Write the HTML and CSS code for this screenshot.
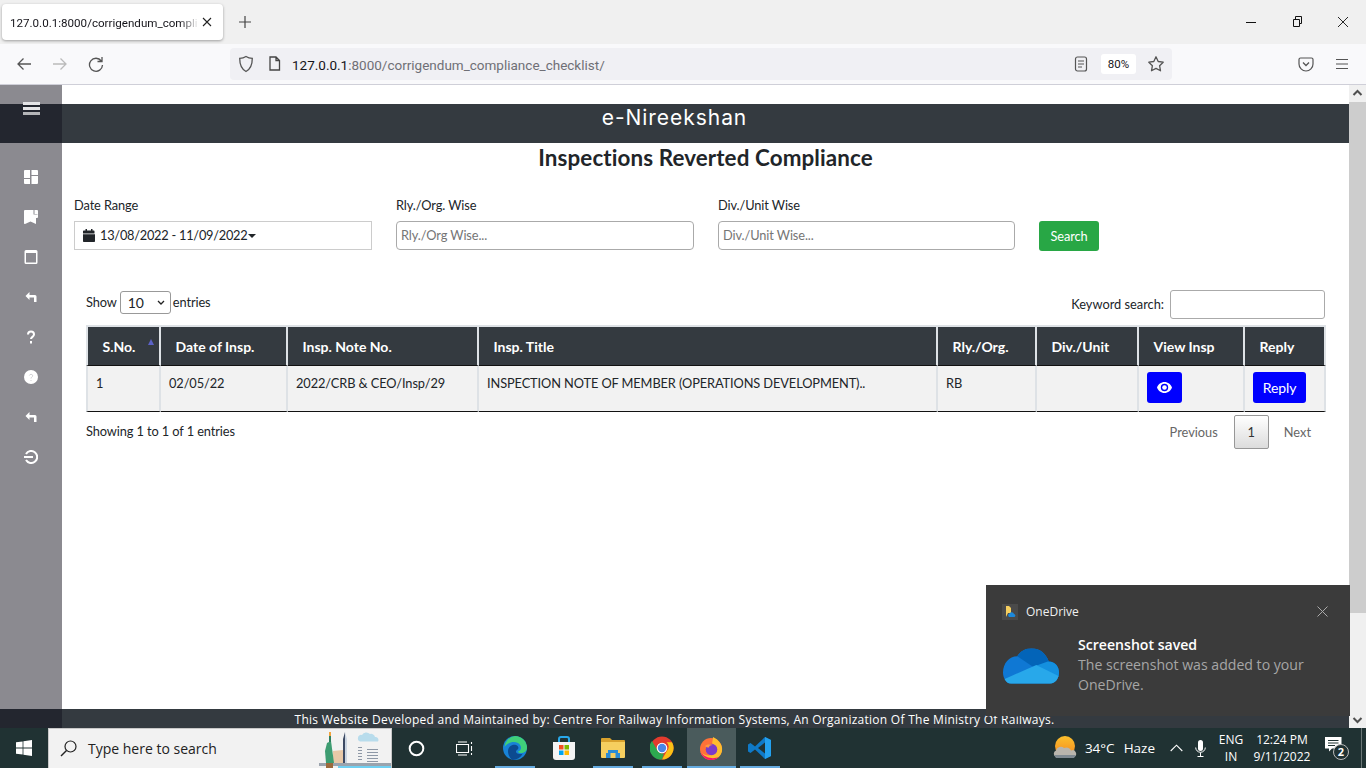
FILE: index.html
```html
<!DOCTYPE html>
<html lang="en">
<head>
<meta charset="utf-8">
<title>e-Nireekshan</title>
<link rel="stylesheet" href="styles.css">
</head>
<body>
<div class="screen">
  <div class="tabbar">
    <div class="tab">
      <span class="tab-title">127.0.0.1:8000/corrigendum_compli</span>
      <svg class="tab-close" width="10" height="10" viewBox="0 0 10 10"><path d="M1 1l8 8M9 1l-8 8" stroke="#222" stroke-width="1.1" fill="none"/></svg>
    </div>
    <svg class="newtab" width="14" height="14" viewBox="0 0 14 14"><path d="M7 1v12M1 7h12" stroke="#444" stroke-width="1.2"/></svg>
    <div class="winctl">
      <svg width="46" height="16" viewBox="0 0 46 16"><path d="M18 8.500h10" stroke="#111" stroke-width="1"/></svg>
      <svg width="46" height="16" viewBox="0 0 46 16"><path d="M19.500 5.500h6v7h-6zM21.500 5.500v-3h6v7h-2" stroke="#111" fill="none"/></svg>
      <svg width="46" height="16" viewBox="0 0 46 16"><path d="M18 3l10 10M28 3l-10 10" stroke="#111" fill="none" stroke-width=".9"/></svg>
    </div>
  </div>
  <div class="toolbar">
    <div class="nav">
      <svg width="16" height="16" viewBox="0 0 16 16"><path d="M15 8H2M7.500 2.500L2 8l5.500 5.500" stroke="#555" stroke-width="1.3" fill="none"/></svg>
      <svg width="16" height="16" viewBox="0 0 16 16"><path d="M1 8h13M8.500 2.500L14 8l-5.500 5.500" stroke="#bbb" stroke-width="1.3" fill="none"/></svg>
      <svg width="16" height="16" viewBox="0 0 16 16"><path d="M13.300 5A6.500 6.500 0 1 0 14.500 9M14 1v4.500H9.500" stroke="#555" stroke-width="1.3" fill="none"/></svg>
    </div>
    <div class="urlbar">
      <svg class="u-shield" width="16" height="18" viewBox="0 0 16 18"><path d="M8 1.500c2 1.300 4 1.800 6.300 1.800 0 6-1 10.500-6.300 13.200C2.700 13.800 1.700 9.300 1.700 3.300 4 3.300 6 2.800 8 1.500z" stroke="#555" stroke-width="1.300" fill="none"/></svg>
      <svg class="u-page" width="13" height="15" viewBox="0 0 13 15"><path d="M2 1h6l3.500 3.500V14H2zM8 1v3.500h3.500" stroke="#444" stroke-width="1.300" fill="none"/></svg>
      <span class="url"><span class="url-host">127.0.0.1</span>:8000/corrigendum_compliance_checklist/</span>
      <svg class="u-reader" width="14" height="16" viewBox="0 0 14 16"><rect x="1.500" y="1" width="11" height="14" rx="2" stroke="#555" stroke-width="1.200" fill="none"/><path d="M4 5h6M4 8h6M4 11h4" stroke="#555" stroke-width="1.100"/></svg>
      <span class="zoomlvl">80%</span>
      <svg class="u-star" width="18" height="18" viewBox="0 0 18 18"><path d="M9 1.800l2.200 4.700 5 .7-3.600 3.500.9 5.100L9 13.400l-4.500 2.400.9-5.100L1.800 7.200l5-.7z" stroke="#555" stroke-width="1.300" fill="none" stroke-linejoin="round"/></svg>
    </div>
    <div class="tools">
      <svg width="16" height="16" viewBox="0 0 16 16"><path d="M2.500 2h11A1.500 1.500 0 0 1 15 3.500V8a7 7 0 0 1-14 0V3.500A1.500 1.500 0 0 1 2.500 2z" stroke="#555" stroke-width="1.200" fill="none"/><path d="M5 6.500L8 9.500l3-3" stroke="#555" stroke-width="1.300" fill="none"/></svg>
      <svg width="16" height="16" viewBox="0 0 16 16"><path d="M2 3.500h12M2 8h12M2 12.500h12" stroke="#555" stroke-width="1.200"/></svg>
    </div>
  </div>

  <div class="viewport">
    <aside class="sidebar">
      <svg class="side-menu" width="18" height="14" viewBox="0 0 18 14"><path d="M0 0h17v3H0zM0 5h17v3H0z" fill="#e4e4e6"/><path d="M0 10h17v3H0z" fill="#b4b5b8"/></svg>
      <svg class="side-icon" width="14" height="14" viewBox="0 0 14 14"><path d="M0 1a1 1 0 0 1 1-1h5v8H0zM7.500 0H13a1 1 0 0 1 1 1v4H7.500zM7.500 6H14v7a1 1 0 0 1-1 1H7.500zM0 9h6v5H1a1 1 0 0 1-1-1z" fill="#fff"/></svg>
      <svg class="side-icon" width="14" height="14" viewBox="0 0 14 14"><path d="M1 0h8.500v4.500H13.500V1a1 1 0 0 1 .5 0v6c0 .5-.5 1-1 1h-1v6L6.500 11.500 1 14a1 1 0 0 1-1-.5V1a1 1 0 0 1 1-1z" fill="#fff"/><path d="M10.500 0H13a1 1 0 0 1 1 1v3h-3.500z" fill="#fff"/></svg>
      <svg class="side-icon" width="14" height="14" viewBox="0 0 14 14"><path d="M2 0h10a1.500 1.500 0 0 1 1.500 1.500v11A1.500 1.500 0 0 1 12 14H2a1.500 1.500 0 0 1-1.500-1.500v-11A1.500 1.500 0 0 1 2 0zm0 3v9.500h10V3z" fill="#fff"/></svg>
      <svg class="side-icon" width="14" height="14" viewBox="0 0 14 14"><path d="M5.500 2L1.500 6l4 4V7.500H10V12h2.500V6.500a1.500 1.500 0 0 0-1.500-1.500H5.500z" fill="#fff"/></svg>
      <svg class="side-icon" width="14" height="14" viewBox="0 0 14 14"><path d="M4 4.500a3 3 0 0 1 6 0c0 2.200-3 2.500-3 4.500" stroke="#fff" stroke-width="2" fill="none"/><path d="M6 11h2v2.500H6z" fill="#fff"/></svg>
      <svg class="side-icon" width="14" height="14" viewBox="0 0 14 14"><circle cx="7" cy="7" r="7" fill="#fff"/><path d="M5.400 5.500a1.700 1.700 0 0 1 3.300.3c0 1.200-1.700 1.300-1.700 2.700M7 10v1" stroke="#cfcfd2" fill="none"/></svg>
      <svg class="side-icon" width="14" height="14" viewBox="0 0 14 14"><path d="M5.500 2L1.500 6l4 4V7.500H10V12h2.500V6.500a1.500 1.500 0 0 0-1.500-1.500H5.500z" fill="#fff"/></svg>
      <svg class="side-icon" width="14" height="14" viewBox="0 0 14 14"><path d="M2 4a6 6 0 1 1 0 6" stroke="#fff" stroke-width="2" fill="none"/><path d="M0 7h9" stroke="#fff" stroke-width="2"/></svg>
    </aside>

    <main class="page">
      <header class="brand">e-Nireekshan</header>
      <h1 class="title">Inspections Reverted Compliance</h1>

      <form class="filters">
        <div class="field">
          <label class="field-label">Date Range</label>
          <div class="date-box">
            <svg width="12" height="13" viewBox="0 0 12 13"><path d="M2.500 0h1.500v1.500h4V0h1.500v1.500h1.300c.4 0 .7.300.7.700V4.500H0V2.200c0-.4.300-.7.700-.7h1.800zM0 5.300h12v7c0 .4-.3.700-.7.700H.7c-.4 0-.7-.3-.7-.7z" fill="#212529"/></svg>
            <span>13/08/2022 - 11/09/2022</span>
            <span class="caret"></span>
          </div>
        </div>
        <div class="field">
          <label class="field-label">Rly./Org. Wise</label>
          <div class="text-box">Rly./Org Wise...</div>
        </div>
        <div class="field field-last">
          <label class="field-label">Div./Unit Wise</label>
          <div class="text-box">Div./Unit Wise...</div>
        </div>
        <div class="search-btn">Search</div>
      </form>

      <section class="listing">
        <div class="list-top">
          <div class="len">Show <span class="len-select">10<svg width="8" height="5" viewBox="0 0 8 5"><path d="M1 1l3 3 3-3" stroke="#222" stroke-width="1.300" fill="none"/></svg></span> entries</div>
          <div class="kw"><span class="kw-label">Keyword search:</span> <span class="kw-input"></span></div>
        </div>
        <table class="grid">
          <colgroup>
            <col class="c1"><col class="c2"><col class="c3"><col class="c4"><col class="c5"><col class="c6"><col class="c7"><col class="c8">
          </colgroup>
          <thead>
            <tr>
              <th class="sorted">S.No.<span class="sort-mark"></span></th>
              <th>Date of Insp.</th>
              <th>Insp. Note No.</th>
              <th>Insp. Title</th>
              <th>Rly./Org.</th>
              <th>Div./Unit</th>
              <th>View Insp</th>
              <th>Reply</th>
            </tr>
          </thead>
          <tbody>
            <tr>
              <td>1</td>
              <td>02/05/22</td>
              <td>2022/CRB &amp; CEO/Insp/29</td>
              <td>INSPECTION NOTE OF MEMBER (OPERATIONS DEVELOPMENT)..</td>
              <td>RB</td>
              <td></td>
              <td class="act"><span class="blue-btn eye"><svg width="15" height="11" viewBox="0 0 15 11"><path d="M7.500 0C4 0 1.300 2.300 0 5.500 1.300 8.700 4 11 7.500 11s6.200-2.300 7.500-5.500C13.700 2.300 11 0 7.500 0zm0 9.200a3.700 3.700 0 1 1 0-7.400 3.700 3.700 0 0 1 0 7.400z" fill="#fff"/><circle cx="7.500" cy="5.500" r="2.300" fill="#fff"/></svg></span></td>
              <td class="act"><span class="blue-btn">Reply</span></td>
            </tr>
          </tbody>
        </table>
        <div class="list-bottom">
          <div class="info">Showing 1 to 1 of 1 entries</div>
          <div class="pager"><span class="pg">Previous</span><span class="pg-cur">1</span><span class="pg">Next</span></div>
        </div>
      </section>

      <footer class="site-foot">This Website Developed and Maintained by: Centre For Railway Information Systems, An Organization Of The Ministry Of Railways.</footer>
    </main>

    <div class="scrollbar">
      <svg class="sb-arrow" width="17" height="17" viewBox="0 0 17 17"><path d="M4.500 10l4-4 4 4" stroke="#505050" stroke-width="2" fill="none"/></svg>
      <div class="sb-thumb"></div>
      <svg class="sb-arrow" width="17" height="17" viewBox="0 0 17 17"><path d="M4.500 7l4 4 4-4" stroke="#505050" stroke-width="2" fill="none"/></svg>
    </div>

    <div class="toast">
      <div class="toast-head">
        <svg width="16" height="16" viewBox="0 0 16 16"><rect width="16" height="16" fill="#4a4a4a"/><path d="M4 2h3l2 2v5H6l-2 4z" fill="#f6cf5f"/><path d="M7 13a2 2 0 0 1 .5-3.500 2.500 2.500 0 0 1 4.500.5 1.600 1.600 0 0 1 .5 3z" fill="#1d89dc"/></svg>
        <span class="toast-app">OneDrive</span>
        <svg class="toast-x" width="11" height="11" viewBox="0 0 11 11"><path d="M.5.5l10 10M10.500.500l-10 10" stroke="#aaa" fill="none"/></svg>
      </div>
      <div class="toast-body">
        <svg class="toast-cloud" width="56" height="36" viewBox="0 0 55 35">
          <clipPath id="cloudclip"><path d="M8 35C3 35 0 29 0 24 0 15 6 8 14 8 17 3 22 0 28 0 36 0 42 5 45 13 51 13 55 18 55 24 55 30 51 35 46 35z"/></clipPath>
          <g clip-path="url(#cloudclip)">
            <rect width="55" height="35" fill="#0f78d4"/>
            <path d="M12 0h40v15L32 20 14 8z" fill="#0364b8"/>
            <path d="M33 17l11-4h12v16z" fill="#1490df"/>
            <path d="M0 31L32.700 16.500 56 28v8H0z" fill="#28a8ea"/>
          </g>
        </svg>
        <div class="toast-text">
          <div class="toast-title">Screenshot saved</div>
          <div class="toast-msg">The screenshot was added to your OneDrive.</div>
        </div>
      </div>
    </div>
  </div>

  <div class="taskbar">
    <div class="start"><svg width="16" height="16" viewBox="0 0 16 16"><path d="M0 2.300L6.600 1.400v6.100H0zM7.400 1.300L16 0v7.500H7.400zM0 8.400h6.600v6.200L0 13.700zM7.400 8.400H16V16L7.400 14.700z" fill="#fff"/></svg></div>
    <div class="tsearch">
      <svg width="17" height="17" viewBox="0 0 17 17"><circle cx="10.500" cy="6.500" r="5.500" stroke="#222" stroke-width="1.200" fill="none"/><path d="M6.500 10.500L1 16" stroke="#222" stroke-width="1.400"/></svg>
      <span>Type here to search</span>
      <svg class="city" width="73" height="37" viewBox="0 0 73 37">
        <path d="M19 35h54v2H19z" fill="#6fd0f2"/>
        <path d="M0 32h73v3H0z" fill="#9aa3ad"/>
        <path d="M14 20l10-1 0 13H14z" fill="#e8c9a8"/>
        <path d="M8 12l4-2 3 22H7l-1-12z" fill="#3e9d72"/>
        <path d="M10 5h2v6h-2z" fill="#2f7f5f"/><path d="M10 1h2v4h-2z" fill="#f2a33c"/>
        <path d="M7 32h7v5H7z" fill="#9c6a3c"/>
        <path d="M24 8l2-7v31h-2z" fill="#3d4a63"/><path d="M26 1l2 7v24h-2z" fill="#ccd6e2"/>
        <path d="M39 7a3 3 0 0 1 4-3 5 5 0 0 1 8-1 4 4 0 0 1 5 3 3 3 0 0 1 3 4.500H41a3 3 0 0 1-2-3.500z" fill="#b8dcec"/>
        <path d="M39 16h4v1h-4zM39 19h4v1h-4zM39 22h4v1h-4zM39 25h4v1h-4zM39 28h4v1h-4zM48 18h11v1H48zM48 21h11v1H48zM48 24h11v1H48zM48 27h11v1H48zM48 30h11v1H48z" fill="#8e98a6"/>
      </svg>
    </div>
    <div class="tb-cell"><svg width="17" height="17" viewBox="0 0 17 17"><circle cx="8.500" cy="8.500" r="6.800" stroke="#fff" stroke-width="2" fill="none"/></svg></div>
    <div class="tb-cell"><svg width="17" height="15" viewBox="0 0 17 15"><path d="M.5 3.500h12v8H.5zM2 1h9M2 14h9M15.500 1v2M15.500 5v5M15.500 12v2" stroke="#fff" fill="none" stroke-width="1.100"/></svg></div>
    <div class="tb-app lit first"><svg width="24" height="24" viewBox="0 0 24 24"><circle cx="12" cy="12" r="12" fill="#1883d6"/><path d="M12 0a12 12 0 0 1 12 12c0 3-3 5-6 5-2 0-3-.7-3-1.500 4-1 4-6 0-8.500-5-2.500-11 0-13.500 4A12 12 0 0 1 12 0z" fill="#3fd07a"/><path d="M5 15c0-4 4-7 8-6 3 1 3 4 1 5-2 1-1 4 3 4 1.500 0 2.500 0 3-1a12 12 0 0 1-11 7C6 21 5 18 5 15z" fill="#0c4a90"/></svg></div>
    <div class="tb-app"><svg width="24" height="24" viewBox="0 0 24 24"><path d="M7 7V3a2 2 0 0 1 2-2h6a2 2 0 0 1 2 2v4" stroke="#28a8ea" stroke-width="2" fill="none"/><path d="M1 6h22v15a3 3 0 0 1-3 3H4a3 3 0 0 1-3-3z" fill="#f4f4f4"/><path d="M7 9h4.500v4.500H7z" fill="#f25022"/><path d="M12.500 9H17v4.500h-4.500z" fill="#7fba00"/><path d="M7 14.500h4.500V19H7z" fill="#00a4ef"/><path d="M12.500 14.500H17V19h-4.500z" fill="#ffb900"/></svg></div>
    <div class="tb-app lit"><svg width="24" height="20" viewBox="0 0 24 20"><path d="M0 1a1 1 0 0 1 1-1h8l2 2h12a1 1 0 0 1 1 1v2H0z" fill="#d9a22d"/><path d="M0 4h24v15a1 1 0 0 1-1 1H1a1 1 0 0 1-1-1z" fill="#f6cf5f"/><path d="M7 12h10v3h2v5H5v-5h2z" fill="#2a8cd6"/><path d="M9.500 15h5v5h-5z" fill="#f6cf5f"/></svg></div>
    <div class="tb-app lit"><svg width="24" height="24" viewBox="0 0 24 24"><circle cx="12" cy="12" r="11.500" fill="#e33b2e"/><path d="M22 6.250A11.500 11.500 0 0 1 12 23.500l5-8.700a5.750 5.750 0 0 0-.5-8.550z" fill="#fbc116"/><path d="M2 5l4.800 8.300A5.750 5.750 0 0 0 14 17.300L12 23.500A11.500 11.500 0 0 1 2 5z" fill="#2da94f"/><circle cx="12" cy="12" r="5.300" fill="#fff"/><circle cx="12" cy="12" r="4.200" fill="#4a86e8"/></svg></div>
    <div class="tb-app active"><svg width="24" height="24" viewBox="0 0 24 24"><circle cx="12" cy="13" r="11" fill="#ff7139"/><path d="M14 1c6 3 10 8 9 14-1 5-5 8.500-11 8.500-5 0-9-3-10.500-7.500 3 3 7 4 11 3 4-1 5-5 3-8-1-2-3-3-2-6 .2-1.500.5-3 .5-4z" fill="#ffbd2e"/><path d="M1.500 16A11 11 0 0 0 12 24c3 0 6-1 8-3-5 2-13 2-18.500-5z" fill="#f5156c"/><circle cx="12.500" cy="13.500" r="5.800" fill="#7d3bc9"/><path d="M6 10c2-2 6-2.500 8-1-3 0-4 1-4 2.500-1.500 0-3-.5-4-1.500z" fill="#ff9a3c"/></svg></div>
    <div class="tb-app lit"><svg width="24" height="24" viewBox="0 0 24 24"><path d="M17 1l6 3v16l-6 3-10-9.500L2.500 17 0 15.500v-7L2.500 7 7 10.500z" fill="#0f7ac8"/><path d="M17 6.500L10 12l7 5.500z" fill="#203233"/><path d="M17 1l6 3v16l-6 3z" fill="#23a1ef"/></svg></div>
    <div class="tray">
      <svg width="24" height="24" viewBox="0 0 24 24">
        <linearGradient id="sun" x1="0" y1="0" x2="0" y2="1"><stop offset="0" stop-color="#fbc02d"/><stop offset="1" stop-color="#f58a1f"/></linearGradient>
        <circle cx="12" cy="10" r="10" fill="url(#sun)"/>
        <path d="M3 21a3.500 3.500 0 0 1 0-6.500 5 5 0 0 1 8-2.500 5 5 0 0 1 7 2.500 3.500 3.500 0 0 1 3 6.500z" fill="#b9b5ad"/>
        <path d="M1 19h22l-2 3H3z" fill="#7f8a92"/>
      </svg>
      <span class="temp">34°C</span><span class="haze">Haze</span>
      <svg class="chev" width="13" height="8" viewBox="0 0 13 8"><path d="M.7 7L6.500 1.200 12.300 7" stroke="#fff" fill="none" stroke-width="1.100"/></svg>
      <svg class="mic" width="11" height="17" viewBox="0 0 11 17"><rect x="3" y="0" width="5" height="11" rx="2.500" fill="#fff"/><path d="M.7 7.500a4.800 4.800 0 0 0 9.600 0M5.500 12.500V16M2.500 16.500h6" stroke="#fff" fill="none"/></svg>
      <div class="lang"><span>ENG</span><span>IN</span></div>
      <div class="clock"><span>12:24 PM</span><span>9/11/2022</span></div>
      <div class="notif">
        <svg width="17" height="15" viewBox="0 0 17 15"><path d="M0 0h16.500v11.500H7L4 14.500v-3H0z" fill="#fff"/><path d="M3 3.500h10.500M3 6h10.500M3 8.500h7" stroke="#1f3333"/></svg>
        <span class="notif-badge">2</span>
      </div>
      <div class="show-desktop"></div>
    </div>
  </div>
</div>
</body>
</html>
```

FILE: styles.css
```css
* { box-sizing: border-box; }
html, body { margin: 0; padding: 0; height: 100%; overflow: hidden; }
body { font-family: "Lato", sans-serif; font-size: 12.800px; letter-spacing: -.1px; color: #212529; }
.screen { width: 1366px; height: 768px; display: flex; flex-direction: column; }

/* browser chrome */
.tabbar { height: 44px; background: #f0f0f0; display: flex; align-items: center; padding-left: 2px; font-family: "Roboto", sans-serif; letter-spacing: 0; }
.tab { width: 221px; height: 36px; background: #fff; border-radius: 4px; box-shadow: 0 1px 3px rgba(0,0,0,.35); display: flex; align-items: center; padding: 2px 11px 0 8px; font-size: 11.600px; color: #15141a; }
.tab-title { flex: 1; white-space: nowrap; -webkit-mask-image: linear-gradient(to right, #000 90%, transparent 100%); mask-image: linear-gradient(to right, #000 90%, transparent 100%); }
.tab-close { margin: -2px 0 0 3px; flex: none; }
.newtab { margin-left: 15px; }
.winctl { margin-left: auto; display: flex; align-items: center; }
.toolbar { height: 41px; background: #f9f9fb; border-bottom: 1px solid #cfcfd8; display: flex; align-items: center; font-family: "Roboto", sans-serif; letter-spacing: 0; padding-bottom: 1px; }
.nav { width: 230px; display: flex; gap: 20px; padding-left: 16px; }
.urlbar { width: 942px; height: 32px; background: #f0f0f4; border-radius: 4px; display: flex; align-items: center; padding-left: 8px; color: #6f6f76; font-size: 13.500px; }
.u-page { margin-left: 14px; }
.url { margin-left: 11px; white-space: nowrap; padding-top: 2px; }
.url-host { color: #15141a; }
.u-reader { margin-left: auto; }
.zoomlvl { margin-left: 13px; width: 35px; height: 20px; border-radius: 3px; background: #fff; color: #15141a; font-size: 11.500px; display: flex; align-items: center; justify-content: center; }
.u-star { margin: 0 7px 0 11px; }
.tools { flex: 1; display: flex; justify-content: flex-end; gap: 20px; padding-right: 16px; }

/* page */
.viewport { position: relative; flex: 1; min-height: 0; display: flex; }
.sidebar { position: relative; z-index: 1; width: 62px; flex: none; display: flex; flex-direction: column; align-items: center; padding-top: 17px; background: linear-gradient(to bottom, #8b8a90 0, #8b8a90 19px, #23262f 19px, #23262f 58px, #8b8a90 58px, #8b8a90 624px, #23262f 624px); }
.side-menu { margin-bottom: 54px; margin-left: 1px; flex: none; }
.side-icon { margin-bottom: 26px; flex: none; }
.page { flex: 1; min-width: 0; display: flex; flex-direction: column; background: #fff; padding-top: 19px; margin-left: -62px; }
.brand { height: 39px; background: #343a40; color: #fff; font-family: "Inter", sans-serif; font-size: 21px; letter-spacing: .95px; text-align: center; line-height: 28px; }
.title { margin: 0 0 0 62px; height: 28px; font-size: 22.400px; letter-spacing: .1px; font-weight: 700; line-height: 29px; color: #212529; text-align: center; }
.filters { display: flex; align-items: flex-start; gap: 24px; padding: 26px 0 0 74px; }
.field { width: 298px; }
.field-last { width: 297px; }
.field-label { display: block; height: 24px; line-height: 16px; }
.date-box { height: 29px; border: 1px solid #ccc; display: flex; align-items: center; gap: 5px; padding: 0 0 1px 8px; color: #212529; font-size: 12.800px; letter-spacing: -.25px; }
.caret { width: 0; height: 0; border-left: 4.500px solid transparent; border-right: 4.500px solid transparent; border-top: 4.500px solid #212529; margin: 1px 0 0 -4px; }
.text-box { height: 29px; border: 1px solid #aaa; border-radius: 4px; display: flex; align-items: center; padding: 0 0 1px 4px; color: #757575; }
.search-btn { margin-top: 24px; width: 60px; height: 30px; background: #28a745; color: #fff; border-radius: 3px; display: flex; align-items: center; justify-content: center; }
.listing { padding: 0 24px 0 86px; margin-top: 39px; }
.list-top { display: flex; justify-content: space-between; align-items: center; height: 29px; margin-bottom: 6px; }
.len { display: flex; align-items: center; gap: 3px; margin-top: -5px; }
.len-select { width: 51px; height: 23px; margin-right: -1px; border: 1px solid #999; border-radius: 3px; display: flex; align-items: center; justify-content: space-between; padding: 0 5px 0 7px; color: #212529; font-size: 14px; }
.kw { display: flex; align-items: center; gap: 6px; letter-spacing: 0; }
.kw-label { margin-top: -2px; }
.kw-input { width: 155px; height: 29px; border: 1px solid #aaa; border-radius: 3px; background: #fff; }
.grid { width: 1240px; table-layout: fixed; border-collapse: separate; border-spacing: 0; }
.c1 { width: 75px; } .c2 { width: 127px; } .c3 { width: 191px; } .c4 { width: 459px; }
.c5 { width: 99px; } .c6 { width: 102px; } .c7 { width: 106px; } .c8 { width: 81px; }
.grid th { height: 41px; background: #343a40; color: #fff; font-weight: 700; font-size: 14px; letter-spacing: 0; text-align: left; padding: 0 0 0 14.500px; border-top: 2px solid #dee2e6; border-right: 2px solid #dee2e6; border-bottom: 1px solid #111; position: relative; }
.grid th:first-child, .grid td:first-child { border-left: 2px solid #dee2e6; }
.grid td { height: 46px; background: #f2f2f2; vertical-align: top; padding: 9px 0 0 8px; border-right: 2px solid #dee2e6; border-bottom: 1px solid #111; white-space: nowrap; overflow: hidden; }
.grid td.act { padding: 6px 0 0 8px; }
.sort-mark { position: absolute; right: 5px; top: 12px; width: 0; height: 0; border-left: 3.500px solid transparent; border-right: 3.500px solid transparent; border-bottom: 6px solid #5b62c7; }
.blue-btn { display: inline-flex; align-items: center; justify-content: center; height: 31px; width: 53px; background: #00f; color: #fff; border-radius: 3px; font-size: 14px; }
.blue-btn.eye { width: 35px; }
.list-bottom { display: flex; justify-content: space-between; }
.info { padding-top: 11px; }
.pager { display: flex; align-items: center; padding-top: 3px; margin-right: -1px; color: #666; letter-spacing: 0; }
.pg { padding: 0 15px; }
.pg:first-child { padding-right: 16px; }
.pg-cur { width: 35px; height: 34px; border: 1px solid #979797; border-radius: 2px; background: linear-gradient(to bottom, #fff, #dcdcdc); color: #333; display: flex; align-items: center; justify-content: center; }
.site-foot { margin-top: auto; height: 19px; background: #343a40; color: #fff; font-family: "Open Sans", sans-serif; font-size: 12px; letter-spacing: .27px; line-height: 21px; text-align: center; white-space: nowrap; }

/* scrollbar */
.scrollbar { width: 17px; flex: none; background: #f0f0f0; display: flex; flex-direction: column; justify-content: space-between; }
.sb-thumb { flex: none; height: 511px; margin-bottom: auto; background: #cdcdcd; }

/* toast */
.toast { position: absolute; z-index: 2; left: 986px; top: 500px; width: 364px; height: 131px; background: #3b3b3b; color: #fff; font-family: "Open Sans", sans-serif; letter-spacing: 0; padding: 18px 16px; }
.toast-head { display: flex; align-items: center; gap: 8px; font-size: 12px; }
.toast-app { color: #f0f0f0; }
.toast-x { margin-left: auto; margin-right: 6px; }
.toast-body { display: flex; margin-top: 15px; }
.toast-cloud { margin: 13px 0 0 1px; flex: none; }
.toast-text { margin-left: 19px; font-size: 14.100px; line-height: 20px; }
.toast-title { font-weight: 600; color: #fff; }
.toast-msg { color: #a6a6a6; width: 245px; }

/* taskbar */
.taskbar { height: 40px; background: #203233; display: flex; align-items: stretch; color: #fff; font-family: "Open Sans", sans-serif; letter-spacing: 0; }
.start { width: 48px; display: flex; align-items: center; justify-content: center; }
.tsearch { width: 344px; background: #f2f2f2; border: 1px solid #c8c8c8; border-bottom-width: 0; display: flex; align-items: center; padding-left: 11px; color: #222; font-size: 14px; overflow: hidden; }
.tsearch span { margin-left: 11px; }
.city { margin-left: auto; align-self: flex-end; margin-right: -1px; }
.tb-cell { width: 48px; display: flex; align-items: center; justify-content: center; }
.tb-app { width: 49px; display: flex; align-items: center; justify-content: center; }
.tb-app.first { margin-left: 2.500px; }
.tb-app.lit { background: linear-gradient(#65abe0, #65abe0) center bottom / 40px 2px no-repeat; }
.tb-app.active { background: linear-gradient(#65abe0, #65abe0) center bottom / 100% 2px no-repeat, #4a5b5c; }
.tray { margin-left: auto; display: flex; align-items: center; font-size: 13.500px; }
.temp { margin-left: 8px; }
.haze { margin-left: 9px; }
.chev { margin-left: 15px; }
.mic { margin-left: 12px; }
.lang { margin-left: 10px; width: 30px; display: flex; flex-direction: column; align-items: center; font-size: 12px; line-height: 17px; }
.clock { margin-left: 5px; width: 62px; display: flex; flex-direction: column; align-items: center; font-size: 12px; line-height: 17px; }
.notif { position: relative; margin-left: 12px; width: 24px; height: 22px; }
.notif-badge { position: absolute; left: 8px; top: 7px; width: 16px; height: 16px; border: 1px solid #bbb; border-radius: 50%; background: #203233; font-size: 11px; font-weight: 700; line-height: 14px; text-align: center; }
.show-desktop { align-self: stretch; width: 5px; margin-left: 12px; border-left: 1px solid #6b7777; }
```
